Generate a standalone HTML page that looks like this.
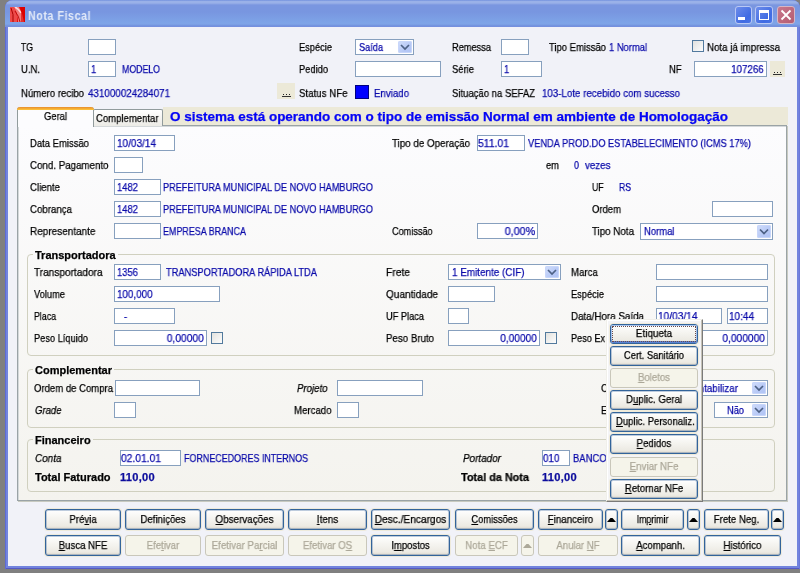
<!DOCTYPE html><html><head><meta charset='utf-8'><style>
html,body{margin:0;padding:0;}
body{width:800px;height:573px;overflow:hidden;background:#808080;position:relative;font-family:'Liberation Sans', sans-serif;font-size:11px;}
.a{position:absolute;}
.t{position:absolute;white-space:nowrap;will-change:transform;-webkit-text-stroke:0.25px currentColor;font-family:'Liberation Sans', sans-serif;font-size:11px;line-height:13px;}
.c{text-align:center;}
u{text-decoration:underline;text-underline-offset:1px;}

#t1{transform:scaleX(0.8920);}
#t2{transform:scaleX(0.7853);}
#t3{transform:scaleX(0.8431);}
#t4{transform:scaleX(0.8348);}
#t5{transform:scaleX(0.8393);}
#t6{transform:scaleX(0.8606);}
#t7{transform:scaleX(0.8515);}
#t8{transform:scaleX(0.8843);}
#t9{transform:scaleX(0.8636);}
#t10{transform:scaleX(0.8600);}
#t11{transform:scaleX(0.7969);}
#t12{transform:scaleX(0.8463);}
#t13{transform:scaleX(0.8564);}
#t14{transform:scaleX(0.8600);}
#t15{transform:scaleX(0.8520);}
#t16{transform:scaleX(0.8851);}
#t17{transform:scaleX(0.8733);}
#t18{transform:scaleX(0.8936);}
#t19{transform:scaleX(0.8813);}
#t20{transform:scaleX(0.8802);}
#t21{transform:scaleX(0.8646);}
#t22{transform:scaleX(0.8850);}
#t23{transform:scaleX(1.0783);}
#t24{transform:scaleX(0.8664);}
#t25{transform:scaleX(0.8548);}
#t26{transform:scaleX(0.8615);}
#t27{transform:scaleX(0.9106);}
#t28{transform:scaleX(0.8898);}
#t29{transform:scaleX(0.9443);}
#t30{transform:scaleX(0.8438);}
#t31{transform:scaleX(0.8853);}
#t32{transform:scaleX(0.8507);}
#t33{transform:scaleX(0.8163);}
#t34{transform:scaleX(0.8870);}
#t35{transform:scaleX(0.8759);}
#t36{transform:scaleX(0.8577);}
#t37{transform:scaleX(0.8319);}
#t38{transform:scaleX(0.7838);}
#t39{transform:scaleX(0.7853);}
#t40{transform:scaleX(0.8804);}
#t41{transform:scaleX(0.8577);}
#t42{transform:scaleX(0.8319);}
#t43{transform:scaleX(0.8625);}
#t44{transform:scaleX(0.9076);}
#t45{transform:scaleX(0.8130);}
#t46{transform:scaleX(0.8281);}
#t47{transform:scaleX(0.9775);}
#t48{transform:scaleX(0.8880);}
#t49{transform:scaleX(0.8603);}
#t51{transform:scaleX(0.9156);}
#t52{transform:scaleX(0.8577);}
#t53{transform:scaleX(0.8431);}
#t54{transform:scaleX(0.9343);}
#t55{transform:scaleX(0.8985);}
#t56{transform:scaleX(0.8753);}
#t57{transform:scaleX(0.8446);}
#t58{transform:scaleX(0.8927);}
#t59{transform:scaleX(0.9140);}
#t60{transform:scaleX(0.8431);}
#t61{transform:scaleX(0.7991);}
#t62{transform:scaleX(0.8600);}
#t63{transform:scaleX(0.8398);}
#t64{transform:scaleX(0.8909);}
#t65{transform:scaleX(0.9223);}
#t66{transform:scaleX(0.9081);}
#t67{transform:scaleX(0.8409);}
#t68{transform:scaleX(0.9305);}
#t69{transform:scaleX(0.8820);}
#t70{transform:scaleX(0.9179);}
#t71{transform:scaleX(0.8299);}
#t72{transform:scaleX(0.9261);}
#t74{transform:scaleX(0.8672);}
#t75{transform:scaleX(0.8749);}
#t76{transform:scaleX(0.8600);}
#t77{transform:scaleX(0.8951);}
#t78{transform:scaleX(0.8666);}
#t79{transform:scaleX(0.8762);}
#t80{transform:scaleX(0.8600);}
#t81{transform:scaleX(0.8421);}
#t83{transform:scaleX(0.9026);}
#t84{transform:scaleX(0.9340);}
#t85{transform:scaleX(0.8115);}
#t86{transform:scaleX(0.9004);}
#t87{transform:scaleX(0.8987);}
#t88{transform:scaleX(0.8600);}
#t90{transform:scaleX(1.0045);}
#t91{transform:scaleX(0.9875);}
#t92{transform:scaleX(1.0045);}
#t93{transform:scaleX(0.8978);}
#t94{transform:scaleX(0.8533);}
#t95{transform:scaleX(0.8719);}
#t96{transform:scaleX(0.8851);}
#t97{transform:scaleX(0.8649);}
#t98{transform:scaleX(0.8726);}
#t99{transform:scaleX(0.8886);}
#t100{transform:scaleX(0.8761);}
#t101{transform:scaleX(0.8818);}
#t102{transform:scaleX(0.8762);}
#t103{transform:scaleX(0.8947);}
#t104{transform:scaleX(0.8906);}
#t105{transform:scaleX(0.9239);}
#t106{transform:scaleX(0.8498);}
#t107{transform:scaleX(0.8856);}
#t108{transform:scaleX(0.8600);}
#t109{transform:scaleX(0.7987);}
#t110{transform:scaleX(0.8600);}
#t111{transform:scaleX(0.8753);}
#t112{transform:scaleX(0.8600);}
#t113{transform:scaleX(0.8762);}
#t114{transform:scaleX(0.8710);}
#t115{transform:scaleX(0.8885);}
#t116{transform:scaleX(0.8756);}
#t117{transform:scaleX(0.8621);}
#t118{transform:scaleX(0.8797);}
#t119{transform:scaleX(0.8600);}
#t120{transform:scaleX(0.8729);}
#t121{transform:scaleX(0.8759);}
#t122{transform:scaleX(0.8879);}</style></head><body>
<div class="a" style="left:5px;top:0px;width:795px;height:569px;background:#7284DE;border-radius:8px 8px 0 0;box-shadow:inset 1px 0 0 #5E6BD6, inset -1px 0 0 #6A78DA, inset 0 -1px 0 #5559C4;"></div>
<div class="a" style="left:5px;top:0px;width:795px;height:27px;border-radius:8px 8px 0 0;background:linear-gradient(#6586DA 0px,#9AB1E8 1px,#9AB1E8 3px,#7A96E0 5px,#7896E0 12px,#7DA3E7 22px,#7FA4E7 24px,#7190DC 26px,#7A8FE0 27px);"></div>
<div class="a" style="left:8px;top:27px;width:789px;height:539px;background:#F1F2F8;"></div>
<svg class="a" style="left:10px;top:7px" width="15" height="15"><rect width="15" height="15" fill="#E20404"/><path d="M0,0 L4,0 Q8,7 7,15 L0,15Z" fill="#EE4A4A"/><path d="M4,0 L9,0 Q13,7 14,15 L8,15 Q8,7 4,0Z" fill="#F27A7A"/><path d="M1,1 Q4,7 3,15" stroke="#A80000" stroke-width="1" fill="none"/><path d="M5,4 Q9,9 10,15" stroke="#B80000" stroke-width="0.9" fill="none"/><path d="M5,0 Q9,2 11,6" stroke="#FFD6D6" stroke-width="1.6" fill="none"/><rect x="11" y="0" width="4" height="15" fill="#D80000" opacity=".6"/></svg>
<div id="t1" class="t" style="top:9px;color:#E2E9F8;font-size:12px;line-height:15px;font-weight:bold;left:28px;transform-origin:0 50%;-webkit-text-stroke:0;letter-spacing:0.6px;">Nota Fiscal</div>
<div class="a" style="left:735px;top:6px;width:17px;height:18px;border:1px solid #B9C8F4;border-radius:3px;box-sizing:border-box;background:linear-gradient(135deg,#6E8DEA,#3F6BE3 70%,#4A74E6);"></div>
<div class="a" style="left:755px;top:6px;width:18px;height:18px;border:1px solid #B9C8F4;border-radius:3px;box-sizing:border-box;background:linear-gradient(135deg,#6E8DEA,#3F6BE3 70%,#4A74E6);"></div>
<div class="a" style="left:777px;top:6px;width:18px;height:18px;border:1px solid #D6B6C4;border-radius:3px;box-sizing:border-box;background:linear-gradient(135deg,#C8788C,#B45C72);"></div>
<div class="a" style="left:738px;top:17px;width:7px;height:3px;background:#fff;"></div>
<div class="a" style="left:759px;top:10px;width:10px;height:10px;border:1px solid #fff;border-top-width:3px;box-sizing:border-box;"></div>
<svg class="a" style="left:777px;top:6px" width="18" height="18"><path d="M4.5,4.5 L13.5,13.5 M13.5,4.5 L4.5,13.5" stroke="#fff" stroke-width="1.8"/></svg>
<div id="t2" class="t" style="top:41px;color:#000;font-size:11px;line-height:13px;left:21px;transform-origin:0 50%;">TG</div>
<div class="a" style="left:88px;top:39px;width:28px;height:16px;border:1px solid #87A0BE;background:#fff;box-sizing:border-box;"></div>
<div id="t3" class="t" style="top:41px;color:#000;font-size:11px;line-height:13px;left:299px;transform-origin:0 50%;">Espécie</div>
<div class="a" style="left:355px;top:39px;width:59px;height:16px;border:1px solid #87A0BE;background:#fff;box-sizing:border-box;"></div>
<div class="a" style="left:398px;top:41px;width:14px;height:12px;background:linear-gradient(135deg,#D2DEFB,#B7C9F6 60%,#AFC3F4);border-radius:2px;box-shadow:inset 0 0 0 1px #C8D6FA;"></div>
<svg class="a" style="left:398px;top:41px" width="14" height="12"><path d="M3.0,4.0 l4,4 l4,-4" stroke="#4D6185" stroke-width="1.7" fill="none"/></svg>
<div id="t4" class="t" style="top:41px;color:#0A0AAA;font-size:11px;line-height:13px;left:359px;transform-origin:0 50%;">Saída</div>
<div id="t5" class="t" style="top:41px;color:#000;font-size:11px;line-height:13px;left:452px;transform-origin:0 50%;">Remessa</div>
<div class="a" style="left:501px;top:39px;width:28px;height:16px;border:1px solid #87A0BE;background:#fff;box-sizing:border-box;"></div>
<div id="t6" class="t" style="top:41px;color:#000;font-size:11px;line-height:13px;left:549px;transform-origin:0 50%;">Tipo Emissão</div>
<div id="t7" class="t" style="top:41px;color:#0A0AAA;font-size:11px;line-height:13px;left:609px;transform-origin:0 50%;">1 Normal</div>
<div class="a" style="left:692px;top:40px;width:12px;height:12px;border:1px solid #1C5180;box-sizing:border-box;background:linear-gradient(135deg,#DCDCD7,#FFFFFF);opacity:.75"></div>
<div id="t8" class="t" style="top:41px;color:#000;font-size:11px;line-height:13px;left:707px;transform-origin:0 50%;">Nota já impressa</div>
<div id="t9" class="t" style="top:63px;color:#000;font-size:11px;line-height:13px;left:21px;transform-origin:0 50%;">U.N.</div>
<div class="a" style="left:88px;top:61px;width:28px;height:16px;border:1px solid #87A0BE;background:#fff;box-sizing:border-box;"></div>
<div id="t10" class="t" style="top:63px;color:#0A0AAA;font-size:11px;line-height:13px;left:91px;transform-origin:0 50%;">1</div>
<div id="t11" class="t" style="top:63px;color:#0A0AAA;font-size:11px;line-height:13px;left:122px;transform-origin:0 50%;">MODELO</div>
<div id="t12" class="t" style="top:63px;color:#000;font-size:11px;line-height:13px;left:299px;transform-origin:0 50%;">Pedido</div>
<div class="a" style="left:355px;top:61px;width:86px;height:16px;border:1px solid #87A0BE;background:#fff;box-sizing:border-box;"></div>
<div id="t13" class="t" style="top:63px;color:#000;font-size:11px;line-height:13px;left:452px;transform-origin:0 50%;">Série</div>
<div class="a" style="left:501px;top:61px;width:41px;height:16px;border:1px solid #87A0BE;background:#fff;box-sizing:border-box;"></div>
<div id="t14" class="t" style="top:63px;color:#0A0AAA;font-size:11px;line-height:13px;left:504px;transform-origin:0 50%;">1</div>
<div id="t15" class="t" style="top:63px;color:#000;font-size:11px;line-height:13px;left:669px;transform-origin:0 50%;">NF</div>
<div class="a" style="left:694px;top:61px;width:73px;height:16px;border:1px solid #87A0BE;background:#fff;box-sizing:border-box;"></div>
<div id="t16" class="t" style="top:63px;color:#0A0AAA;font-size:11px;line-height:13px;right:36px;transform-origin:100% 50%;">107266</div>
<div class="a" style="left:770px;top:61px;width:15px;height:16px;background:#ECE9D8;"></div>
<div class="a" style="left:774px;top:72px;width:1px;height:1px;background:#222"></div>
<div class="a" style="left:777px;top:72px;width:1px;height:1px;background:#222"></div>
<div class="a" style="left:780px;top:72px;width:1px;height:1px;background:#222"></div>
<div class="a" style="left:773px;top:74px;width:9px;height:1px;background:#333"></div>
<div id="t17" class="t" style="top:87px;color:#000;font-size:11px;line-height:13px;left:21px;transform-origin:0 50%;">Número recibo</div>
<div id="t18" class="t" style="top:87px;color:#0A0AAA;font-size:11px;line-height:13px;left:88px;transform-origin:0 50%;">431000024284071</div>
<div class="a" style="left:277px;top:83px;width:18px;height:16px;background:#ECE9D8;"></div>
<div class="a" style="left:283px;top:94px;width:1px;height:1px;background:#222"></div>
<div class="a" style="left:286px;top:94px;width:1px;height:1px;background:#222"></div>
<div class="a" style="left:289px;top:94px;width:1px;height:1px;background:#222"></div>
<div class="a" style="left:282px;top:96px;width:9px;height:1px;background:#333"></div>
<div id="t19" class="t" style="top:87px;color:#000;font-size:11px;line-height:13px;left:299px;transform-origin:0 50%;">Status NFe</div>
<div class="a" style="left:355px;top:85px;width:14px;height:14px;background:#0000FF;border:1px solid #000080;box-sizing:border-box;"></div>
<div id="t20" class="t" style="top:87px;color:#0A0AAA;font-size:11px;line-height:13px;left:374px;transform-origin:0 50%;">Enviado</div>
<div id="t21" class="t" style="top:87px;color:#000;font-size:11px;line-height:13px;left:452px;transform-origin:0 50%;">Situação na SEFAZ</div>
<div id="t22" class="t" style="top:87px;color:#0A0AAA;font-size:11px;line-height:13px;left:542px;transform-origin:0 50%;">103-Lote recebido com sucesso</div>
<div class="a" style="left:163px;top:107px;width:625px;height:18px;background:#ECE9D8;"></div>
<div id="t23" class="t" style="top:110px;color:#0505F5;font-size:12.5px;line-height:15px;font-weight:bold;left:170px;transform-origin:0 50%;">O sistema está operando com o tipo de emissão Normal em ambiente de Homologação</div>
<div class="a" style="left:17px;top:125px;width:770px;height:376px;border:1px solid #9AA3A6;box-sizing:border-box;background:linear-gradient(#FCFCFE,#F4F3EE);box-shadow:1px 1px 0 #C8CAC0, inset 1px 1px 0 #D4D8DA;"></div>
<div class="a" style="left:93px;top:109px;width:70px;height:17px;border:1px solid #919B9C;border-bottom:none;border-radius:2px 2px 0 0;box-sizing:border-box;background:linear-gradient(#FFFFFF,#ECEBE6);"></div>
<div id="t24" class="t" style="top:112px;color:#000;font-size:11px;line-height:13px;left:96px;transform-origin:0 50%;">Complementar</div>
<div class="a" style="left:17px;top:107px;width:77px;height:20px;border:1px solid #919B9C;border-bottom:none;border-top:none;border-radius:3px 3px 0 0;box-sizing:border-box;background:#FCFCFE;"></div>
<div class="a" style="left:17px;top:107px;width:77px;height:3px;background:linear-gradient(#E68B2C,#FFC73C);border-radius:3px 3px 0 0;"></div>
<div id="t25" class="t" style="top:110px;color:#000;font-size:11px;line-height:13px;left:44px;transform-origin:0 50%;">Geral</div>
<div id="t26" class="t" style="top:137px;color:#000;font-size:11px;line-height:13px;left:30px;transform-origin:0 50%;">Data Emissão</div>
<div class="a" style="left:114px;top:135px;width:61px;height:16px;border:1px solid #87A0BE;background:#fff;box-sizing:border-box;"></div>
<div id="t27" class="t" style="top:137px;color:#0A0AAA;font-size:11px;line-height:13px;left:117px;transform-origin:0 50%;">10/03/14</div>
<div id="t28" class="t" style="top:137px;color:#000;font-size:11px;line-height:13px;left:392px;transform-origin:0 50%;">Tipo de Operação</div>
<div class="a" style="left:477px;top:135px;width:48px;height:16px;border:1px solid #87A0BE;background:#fff;box-sizing:border-box;"></div>
<div id="t29" class="t" style="top:137px;color:#0A0AAA;font-size:11px;line-height:13px;left:478px;transform-origin:0 50%;">511.01</div>
<div id="t30" class="t" style="top:137px;color:#0A0AAA;font-size:11px;line-height:13px;left:528px;transform-origin:0 50%;">VENDA PROD.DO ESTABELECIMENTO (ICMS 17%)</div>
<div id="t31" class="t" style="top:159px;color:#000;font-size:11px;line-height:13px;left:30px;transform-origin:0 50%;">Cond. Pagamento</div>
<div class="a" style="left:114px;top:157px;width:29px;height:16px;border:1px solid #87A0BE;background:#fff;box-sizing:border-box;"></div>
<div id="t32" class="t" style="top:159px;color:#000;font-size:11px;line-height:13px;left:546px;transform-origin:0 50%;">em</div>
<div id="t33" class="t" style="top:159px;color:#0A0AAA;font-size:11px;line-height:13px;left:574px;transform-origin:0 50%;">0</div>
<div id="t34" class="t" style="top:159px;color:#0A0AAA;font-size:11px;line-height:13px;left:585px;transform-origin:0 50%;">vezes</div>
<div id="t35" class="t" style="top:181px;color:#000;font-size:11px;line-height:13px;left:30px;transform-origin:0 50%;">Cliente</div>
<div class="a" style="left:114px;top:179px;width:47px;height:16px;border:1px solid #87A0BE;background:#fff;box-sizing:border-box;"></div>
<div id="t36" class="t" style="top:181px;color:#0A0AAA;font-size:11px;line-height:13px;left:117px;transform-origin:0 50%;">1482</div>
<div id="t37" class="t" style="top:181px;color:#0A0AAA;font-size:11px;line-height:13px;left:163px;transform-origin:0 50%;">PREFEITURA MUNICIPAL DE NOVO HAMBURGO</div>
<div id="t38" class="t" style="top:181px;color:#000;font-size:11px;line-height:13px;left:592px;transform-origin:0 50%;">UF</div>
<div id="t39" class="t" style="top:181px;color:#0A0AAA;font-size:11px;line-height:13px;left:619px;transform-origin:0 50%;">RS</div>
<div id="t40" class="t" style="top:203px;color:#000;font-size:11px;line-height:13px;left:30px;transform-origin:0 50%;">Cobrança</div>
<div class="a" style="left:114px;top:201px;width:47px;height:16px;border:1px solid #87A0BE;background:#fff;box-sizing:border-box;"></div>
<div id="t41" class="t" style="top:203px;color:#0A0AAA;font-size:11px;line-height:13px;left:117px;transform-origin:0 50%;">1482</div>
<div id="t42" class="t" style="top:203px;color:#0A0AAA;font-size:11px;line-height:13px;left:163px;transform-origin:0 50%;">PREFEITURA MUNICIPAL DE NOVO HAMBURGO</div>
<div id="t43" class="t" style="top:203px;color:#000;font-size:11px;line-height:13px;left:592px;transform-origin:0 50%;">Ordem</div>
<div class="a" style="left:712px;top:201px;width:61px;height:16px;border:1px solid #87A0BE;background:#fff;box-sizing:border-box;"></div>
<div id="t44" class="t" style="top:225px;color:#000;font-size:11px;line-height:13px;left:30px;transform-origin:0 50%;">Representante</div>
<div class="a" style="left:114px;top:223px;width:47px;height:16px;border:1px solid #87A0BE;background:#fff;box-sizing:border-box;"></div>
<div id="t45" class="t" style="top:225px;color:#0A0AAA;font-size:11px;line-height:13px;left:163px;transform-origin:0 50%;">EMPRESA BRANCA</div>
<div id="t46" class="t" style="top:225px;color:#000;font-size:11px;line-height:13px;left:392px;transform-origin:0 50%;">Comissão</div>
<div class="a" style="left:477px;top:223px;width:61px;height:16px;border:1px solid #87A0BE;background:#fff;box-sizing:border-box;"></div>
<div id="t47" class="t" style="top:225px;color:#0A0AAA;font-size:11px;line-height:13px;right:265px;transform-origin:100% 50%;">0,00%</div>
<div id="t48" class="t" style="top:225px;color:#000;font-size:11px;line-height:13px;left:592px;transform-origin:0 50%;">Tipo Nota</div>
<div class="a" style="left:640px;top:223px;width:133px;height:17px;border:1px solid #87A0BE;background:#fff;box-sizing:border-box;"></div>
<div class="a" style="left:757px;top:225px;width:14px;height:13px;background:linear-gradient(135deg,#D2DEFB,#B7C9F6 60%,#AFC3F4);border-radius:2px;box-shadow:inset 0 0 0 1px #C8D6FA;"></div>
<svg class="a" style="left:757px;top:225px" width="14" height="13"><path d="M3.0,4.5 l4,4 l4,-4" stroke="#4D6185" stroke-width="1.7" fill="none"/></svg>
<div id="t49" class="t" style="top:225px;color:#0A0AAA;font-size:11px;line-height:13px;left:644px;transform-origin:0 50%;">Normal</div>
<div class="a" style="left:27px;top:254px;width:748px;height:102px;border:1px solid #D0D0BF;border-radius:4px;box-sizing:border-box;"></div>
<div class="a" style="left:33px;top:252px;width:85px;height:5px;background:#F9F9F9;"></div>
<div id="t50" class="t" style="top:249px;color:#000;font-size:11px;line-height:13px;font-weight:bold;left:35px;transform-origin:0 50%;">Transportadora</div>
<div id="t51" class="t" style="top:266px;color:#000;font-size:11px;line-height:13px;left:34px;transform-origin:0 50%;">Transportadora</div>
<div class="a" style="left:114px;top:264px;width:47px;height:16px;border:1px solid #87A0BE;background:#fff;box-sizing:border-box;"></div>
<div id="t52" class="t" style="top:266px;color:#0A0AAA;font-size:11px;line-height:13px;left:117px;transform-origin:0 50%;">1356</div>
<div id="t53" class="t" style="top:266px;color:#0A0AAA;font-size:11px;line-height:13px;left:166px;transform-origin:0 50%;">TRANSPORTADORA RÁPIDA LTDA</div>
<div id="t54" class="t" style="top:266px;color:#000;font-size:11px;line-height:13px;left:386px;transform-origin:0 50%;">Frete</div>
<div class="a" style="left:448px;top:264px;width:113px;height:16px;border:1px solid #87A0BE;background:#fff;box-sizing:border-box;"></div>
<div class="a" style="left:545px;top:266px;width:14px;height:12px;background:linear-gradient(135deg,#D2DEFB,#B7C9F6 60%,#AFC3F4);border-radius:2px;box-shadow:inset 0 0 0 1px #C8D6FA;"></div>
<svg class="a" style="left:545px;top:266px" width="14" height="12"><path d="M3.0,4.0 l4,4 l4,-4" stroke="#4D6185" stroke-width="1.7" fill="none"/></svg>
<div id="t55" class="t" style="top:266px;color:#0A0AAA;font-size:11px;line-height:13px;left:452px;transform-origin:0 50%;">1 Emitente (CIF)</div>
<div id="t56" class="t" style="top:266px;color:#000;font-size:11px;line-height:13px;left:571px;transform-origin:0 50%;">Marca</div>
<div class="a" style="left:656px;top:264px;width:112px;height:16px;border:1px solid #87A0BE;background:#fff;box-sizing:border-box;"></div>
<div id="t57" class="t" style="top:288px;color:#000;font-size:11px;line-height:13px;left:34px;transform-origin:0 50%;">Volume</div>
<div class="a" style="left:114px;top:286px;width:106px;height:16px;border:1px solid #87A0BE;background:#fff;box-sizing:border-box;"></div>
<div id="t58" class="t" style="top:288px;color:#0A0AAA;font-size:11px;line-height:13px;left:117px;transform-origin:0 50%;">100,000</div>
<div id="t59" class="t" style="top:288px;color:#000;font-size:11px;line-height:13px;left:386px;transform-origin:0 50%;">Quantidade</div>
<div class="a" style="left:448px;top:286px;width:47px;height:16px;border:1px solid #87A0BE;background:#fff;box-sizing:border-box;"></div>
<div id="t60" class="t" style="top:288px;color:#000;font-size:11px;line-height:13px;left:571px;transform-origin:0 50%;">Espécie</div>
<div class="a" style="left:656px;top:286px;width:112px;height:16px;border:1px solid #87A0BE;background:#fff;box-sizing:border-box;"></div>
<div id="t61" class="t" style="top:310px;color:#000;font-size:11px;line-height:13px;left:34px;transform-origin:0 50%;">Placa</div>
<div class="a" style="left:114px;top:308px;width:61px;height:16px;border:1px solid #87A0BE;background:#fff;box-sizing:border-box;"></div>
<div id="t62" class="t" style="top:310px;color:#0A0AAA;font-size:11px;line-height:13px;left:124px;transform-origin:0 50%;">-</div>
<div id="t63" class="t" style="top:310px;color:#000;font-size:11px;line-height:13px;left:386px;transform-origin:0 50%;">UF Placa</div>
<div class="a" style="left:448px;top:308px;width:21px;height:16px;border:1px solid #87A0BE;background:#fff;box-sizing:border-box;"></div>
<div id="t64" class="t" style="top:310px;color:#000;font-size:11px;line-height:13px;left:571px;transform-origin:0 50%;">Data/Hora Saída</div>
<div class="a" style="left:656px;top:308px;width:66px;height:16px;border:1px solid #87A0BE;background:#fff;box-sizing:border-box;"></div>
<div id="t65" class="t" style="top:310px;color:#0A0AAA;font-size:11px;line-height:13px;left:658px;transform-origin:0 50%;">10/03/14</div>
<div class="a" style="left:727px;top:308px;width:41px;height:16px;border:1px solid #87A0BE;background:#fff;box-sizing:border-box;"></div>
<div id="t66" class="t" style="top:310px;color:#0A0AAA;font-size:11px;line-height:13px;left:729px;transform-origin:0 50%;">10:44</div>
<div id="t67" class="t" style="top:332px;color:#000;font-size:11px;line-height:13px;left:34px;transform-origin:0 50%;">Peso Líquido</div>
<div class="a" style="left:114px;top:330px;width:93px;height:16px;border:1px solid #87A0BE;background:#fff;box-sizing:border-box;"></div>
<div id="t68" class="t" style="top:332px;color:#0A0AAA;font-size:11px;line-height:13px;right:596px;transform-origin:100% 50%;">0,00000</div>
<div class="a" style="left:211px;top:332px;width:12px;height:12px;border:1px solid #1C5180;box-sizing:border-box;background:linear-gradient(135deg,#DCDCD7,#FFFFFF);opacity:.75"></div>
<div id="t69" class="t" style="top:332px;color:#000;font-size:11px;line-height:13px;left:386px;transform-origin:0 50%;">Peso Bruto</div>
<div class="a" style="left:448px;top:330px;width:92px;height:16px;border:1px solid #87A0BE;background:#fff;box-sizing:border-box;"></div>
<div id="t70" class="t" style="top:332px;color:#0A0AAA;font-size:11px;line-height:13px;right:263px;transform-origin:100% 50%;">0,00000</div>
<div class="a" style="left:545px;top:332px;width:12px;height:12px;border:1px solid #1C5180;box-sizing:border-box;background:linear-gradient(135deg,#DCDCD7,#FFFFFF);opacity:.75"></div>
<div id="t71" class="t" style="top:332px;color:#000;font-size:11px;line-height:13px;left:571px;transform-origin:0 50%;">Peso Ex</div>
<div class="a" style="left:656px;top:330px;width:112px;height:16px;border:1px solid #87A0BE;background:#fff;box-sizing:border-box;"></div>
<div id="t72" class="t" style="top:332px;color:#0A0AAA;font-size:11px;line-height:13px;right:35px;transform-origin:100% 50%;">0,000000</div>
<div class="a" style="left:27px;top:369px;width:748px;height:59px;border:1px solid #D0D0BF;border-radius:4px;box-sizing:border-box;"></div>
<div class="a" style="left:33px;top:367px;width:81px;height:5px;background:#F7F7F5;"></div>
<div id="t73" class="t" style="top:364px;color:#000;font-size:11px;line-height:13px;font-weight:bold;left:35px;transform-origin:0 50%;">Complementar</div>
<div id="t74" class="t" style="top:382px;color:#000;font-size:11px;line-height:13px;left:34px;transform-origin:0 50%;">Ordem de Compra</div>
<div class="a" style="left:115px;top:380px;width:85px;height:16px;border:1px solid #87A0BE;background:#fff;box-sizing:border-box;"></div>
<div id="t75" class="t" style="top:382px;color:#000;font-size:11px;line-height:13px;font-style:italic;left:297px;transform-origin:0 50%;">Projeto</div>
<div class="a" style="left:337px;top:380px;width:86px;height:16px;border:1px solid #87A0BE;background:#fff;box-sizing:border-box;"></div>
<div id="t76" class="t" style="top:382px;color:#000;font-size:11px;line-height:13px;left:601px;transform-origin:0 50%;">Contabilizar</div>
<div class="a" style="left:680px;top:380px;width:88px;height:16px;border:1px solid #87A0BE;background:#fff;box-sizing:border-box;"></div>
<div class="a" style="left:752px;top:382px;width:14px;height:12px;background:linear-gradient(135deg,#D2DEFB,#B7C9F6 60%,#AFC3F4);border-radius:2px;box-shadow:inset 0 0 0 1px #C8D6FA;"></div>
<svg class="a" style="left:752px;top:382px" width="14" height="12"><path d="M3.0,4.0 l4,4 l4,-4" stroke="#4D6185" stroke-width="1.7" fill="none"/></svg>
<div id="t77" class="t" style="top:382px;color:#0A0AAA;font-size:11px;line-height:13px;left:686px;transform-origin:0 50%;">Contabilizar</div>
<div id="t78" class="t" style="top:404px;color:#000;font-size:11px;line-height:13px;font-style:italic;left:35px;transform-origin:0 50%;">Grade</div>
<div class="a" style="left:114px;top:402px;width:22px;height:16px;border:1px solid #87A0BE;background:#fff;box-sizing:border-box;"></div>
<div id="t79" class="t" style="top:404px;color:#000;font-size:11px;line-height:13px;left:294px;transform-origin:0 50%;">Mercado</div>
<div class="a" style="left:337px;top:402px;width:22px;height:16px;border:1px solid #87A0BE;background:#fff;box-sizing:border-box;"></div>
<div id="t80" class="t" style="top:404px;color:#000;font-size:11px;line-height:13px;left:601px;transform-origin:0 50%;">E</div>
<div class="a" style="left:714px;top:402px;width:54px;height:16px;border:1px solid #87A0BE;background:#fff;box-sizing:border-box;"></div>
<div class="a" style="left:752px;top:404px;width:14px;height:12px;background:linear-gradient(135deg,#D2DEFB,#B7C9F6 60%,#AFC3F4);border-radius:2px;box-shadow:inset 0 0 0 1px #C8D6FA;"></div>
<svg class="a" style="left:752px;top:404px" width="14" height="12"><path d="M3.0,4.0 l4,4 l4,-4" stroke="#4D6185" stroke-width="1.7" fill="none"/></svg>
<div id="t81" class="t" style="top:404px;color:#0A0AAA;font-size:11px;line-height:13px;left:727px;transform-origin:0 50%;">Não</div>
<div class="a" style="left:27px;top:439px;width:748px;height:53px;border:1px solid #D0D0BF;border-radius:4px;box-sizing:border-box;"></div>
<div class="a" style="left:33px;top:437px;width:60px;height:5px;background:#F5F5F2;"></div>
<div id="t82" class="t" style="top:434px;color:#000;font-size:11px;line-height:13px;font-weight:bold;left:35px;transform-origin:0 50%;">Financeiro</div>
<div id="t83" class="t" style="top:452px;color:#000;font-size:11px;line-height:13px;font-style:italic;left:35px;transform-origin:0 50%;">Conta</div>
<div class="a" style="left:120px;top:450px;width:61px;height:16px;border:1px solid #87A0BE;background:#fff;box-sizing:border-box;"></div>
<div id="t84" class="t" style="top:452px;color:#0A0AAA;font-size:11px;line-height:13px;left:121px;transform-origin:0 50%;">02.01.01</div>
<div id="t85" class="t" style="top:452px;color:#0A0AAA;font-size:11px;line-height:13px;left:184px;transform-origin:0 50%;">FORNECEDORES INTERNOS</div>
<div id="t86" class="t" style="top:452px;color:#000;font-size:11px;line-height:13px;font-style:italic;left:463px;transform-origin:0 50%;">Portador</div>
<div class="a" style="left:542px;top:450px;width:28px;height:16px;border:1px solid #87A0BE;background:#fff;box-sizing:border-box;"></div>
<div id="t87" class="t" style="top:452px;color:#0A0AAA;font-size:11px;line-height:13px;left:543px;transform-origin:0 50%;">010</div>
<div id="t88" class="t" style="top:452px;color:#0A0AAA;font-size:11px;line-height:13px;left:573px;transform-origin:0 50%;">BANCO DO BRASIL</div>
<div id="t89" class="t" style="top:471px;color:#000;font-size:11px;line-height:13px;font-weight:bold;left:35px;transform-origin:0 50%;">Total Faturado</div>
<div id="t90" class="t" style="top:471px;color:#0C0C9C;font-size:11px;line-height:13px;font-weight:bold;left:120px;transform-origin:0 50%;letter-spacing:0.3px;">110,00</div>
<div id="t91" class="t" style="top:471px;color:#000;font-size:11px;line-height:13px;font-weight:bold;left:461px;transform-origin:0 50%;">Total da Nota</div>
<div id="t92" class="t" style="top:471px;color:#0C0C9C;font-size:11px;line-height:13px;font-weight:bold;left:542px;transform-origin:0 50%;letter-spacing:0.3px;">110,00</div>
<div class="a" style="left:606px;top:319px;width:97px;height:183px;background:#F4F4F6;border:1px solid;border-color:#F0EFEA #7A7A7A #7A7A7A #F0EFEA;box-sizing:border-box;box-shadow:inset -1px -1px 0 #C4C1B6, inset 1px 1px 0 #FFFFFF;"></div>
<div class="a" style="left:610px;top:324px;width:88px;height:20px;border:1px solid #33649A;border-radius:3px;box-sizing:border-box;background:linear-gradient(#FFFFFF,#F6F5F1 40%,#ECEAE3 85%,#DDD7CA);box-shadow:inset 0 0 0 1px rgba(70,110,160,.35), 0 0 0 1px rgba(236,228,200,.6);"></div>
<div class="a" style="left:611px;top:325px;width:86px;height:18px;box-shadow:inset 0 -2px 0 #5A82D0, inset 0 0 0 1px #A8C4EE;border-radius:2px;"></div>
<div class="a" style="left:612px;top:326px;width:84px;height:16px;border:1px dotted #6A4A4A;box-sizing:border-box;"></div>
<div id="t93" class="t c" style="left:610px;width:88px;top:327px;color:#000;">Etiqueta</div>
<div class="a" style="left:610px;top:346px;width:88px;height:20px;border:1px solid #33649A;border-radius:3px;box-sizing:border-box;background:linear-gradient(#FFFFFF,#F6F5F1 40%,#ECEAE3 85%,#DDD7CA);box-shadow:inset 0 0 0 1px rgba(70,110,160,.35), 0 0 0 1px rgba(236,228,200,.6);"></div>
<div id="t94" class="t c" style="left:610px;width:88px;top:349px;color:#000;">Cert. Sanitário</div>
<div class="a" style="left:610px;top:368px;width:88px;height:20px;border:1px solid #C9C7BA;border-radius:3px;box-sizing:border-box;background:#F5F4EA;"></div>
<div id="t95" class="t c" style="left:610px;width:88px;top:371px;color:#ACA899;"><u>B</u>oletos</div>
<div class="a" style="left:610px;top:390px;width:88px;height:20px;border:1px solid #33649A;border-radius:3px;box-sizing:border-box;background:linear-gradient(#FFFFFF,#F6F5F1 40%,#ECEAE3 85%,#DDD7CA);box-shadow:inset 0 0 0 1px rgba(70,110,160,.35), 0 0 0 1px rgba(236,228,200,.6);"></div>
<div id="t96" class="t c" style="left:610px;width:88px;top:393px;color:#000;">D<u>u</u>plic. Geral</div>
<div class="a" style="left:610px;top:412px;width:88px;height:20px;border:1px solid #33649A;border-radius:3px;box-sizing:border-box;background:linear-gradient(#FFFFFF,#F6F5F1 40%,#ECEAE3 85%,#DDD7CA);box-shadow:inset 0 0 0 1px rgba(70,110,160,.35), 0 0 0 1px rgba(236,228,200,.6);"></div>
<div id="t97" class="t c" style="left:610px;width:88px;top:415px;color:#000;"><u>D</u>uplic. Personaliz.</div>
<div class="a" style="left:610px;top:434px;width:88px;height:20px;border:1px solid #33649A;border-radius:3px;box-sizing:border-box;background:linear-gradient(#FFFFFF,#F6F5F1 40%,#ECEAE3 85%,#DDD7CA);box-shadow:inset 0 0 0 1px rgba(70,110,160,.35), 0 0 0 1px rgba(236,228,200,.6);"></div>
<div id="t98" class="t c" style="left:610px;width:88px;top:437px;color:#000;"><u>P</u>edidos</div>
<div class="a" style="left:610px;top:457px;width:88px;height:20px;border:1px solid #C9C7BA;border-radius:3px;box-sizing:border-box;background:#F5F4EA;"></div>
<div id="t99" class="t c" style="left:610px;width:88px;top:460px;color:#ACA899;"><u>E</u>nviar NFe</div>
<div class="a" style="left:610px;top:479px;width:88px;height:20px;border:1px solid #33649A;border-radius:3px;box-sizing:border-box;background:linear-gradient(#FFFFFF,#F6F5F1 40%,#ECEAE3 85%,#DDD7CA);box-shadow:inset 0 0 0 1px rgba(70,110,160,.35), 0 0 0 1px rgba(236,228,200,.6);"></div>
<div id="t100" class="t c" style="left:610px;width:88px;top:482px;color:#000;"><u>R</u>etornar NFe</div>
<div class="a" style="left:45px;top:509px;width:76px;height:21px;border:1px solid #33649A;border-radius:3px;box-sizing:border-box;background:linear-gradient(#FFFFFF,#F6F5F1 40%,#ECEAE3 85%,#DDD7CA);box-shadow:inset 0 0 0 1px rgba(70,110,160,.35), 0 0 0 1px rgba(236,228,200,.6);"></div>
<div id="t101" class="t c" style="left:45px;width:76px;top:513px;color:#000;">Pré<u>v</u>ia</div>
<div class="a" style="left:125px;top:509px;width:76px;height:21px;border:1px solid #33649A;border-radius:3px;box-sizing:border-box;background:linear-gradient(#FFFFFF,#F6F5F1 40%,#ECEAE3 85%,#DDD7CA);box-shadow:inset 0 0 0 1px rgba(70,110,160,.35), 0 0 0 1px rgba(236,228,200,.6);"></div>
<div id="t102" class="t c" style="left:125px;width:76px;top:513px;color:#000;">Definições</div>
<div class="a" style="left:205px;top:509px;width:79px;height:21px;border:1px solid #33649A;border-radius:3px;box-sizing:border-box;background:linear-gradient(#FFFFFF,#F6F5F1 40%,#ECEAE3 85%,#DDD7CA);box-shadow:inset 0 0 0 1px rgba(70,110,160,.35), 0 0 0 1px rgba(236,228,200,.6);"></div>
<div id="t103" class="t c" style="left:205px;width:79px;top:513px;color:#000;"><u>O</u>bservações</div>
<div class="a" style="left:288px;top:509px;width:79px;height:21px;border:1px solid #33649A;border-radius:3px;box-sizing:border-box;background:linear-gradient(#FFFFFF,#F6F5F1 40%,#ECEAE3 85%,#DDD7CA);box-shadow:inset 0 0 0 1px rgba(70,110,160,.35), 0 0 0 1px rgba(236,228,200,.6);"></div>
<div id="t104" class="t c" style="left:288px;width:79px;top:513px;color:#000;"><u>I</u>tens</div>
<div class="a" style="left:371px;top:509px;width:79px;height:21px;border:1px solid #33649A;border-radius:3px;box-sizing:border-box;background:linear-gradient(#FFFFFF,#F6F5F1 40%,#ECEAE3 85%,#DDD7CA);box-shadow:inset 0 0 0 1px rgba(70,110,160,.35), 0 0 0 1px rgba(236,228,200,.6);"></div>
<div id="t105" class="t c" style="left:371px;width:79px;top:513px;color:#000;"><u>D</u>esc./Encargos</div>
<div class="a" style="left:455px;top:509px;width:79px;height:21px;border:1px solid #33649A;border-radius:3px;box-sizing:border-box;background:linear-gradient(#FFFFFF,#F6F5F1 40%,#ECEAE3 85%,#DDD7CA);box-shadow:inset 0 0 0 1px rgba(70,110,160,.35), 0 0 0 1px rgba(236,228,200,.6);"></div>
<div id="t106" class="t c" style="left:455px;width:79px;top:513px;color:#000;"><u>C</u>omissões</div>
<div class="a" style="left:538px;top:509px;width:65px;height:21px;border:1px solid #33649A;border-radius:3px;box-sizing:border-box;background:linear-gradient(#FFFFFF,#F6F5F1 40%,#ECEAE3 85%,#DDD7CA);box-shadow:inset 0 0 0 1px rgba(70,110,160,.35), 0 0 0 1px rgba(236,228,200,.6);"></div>
<div id="t107" class="t c" style="left:538px;width:65px;top:513px;color:#000;"><u>F</u>inanceiro</div>
<div class="a" style="left:605px;top:509px;width:13px;height:21px;border:1px solid #33649A;border-radius:3px;box-sizing:border-box;background:linear-gradient(#FFFFFF,#F6F5F1 40%,#ECEAE3 85%,#DDD7CA);box-shadow:inset 0 0 0 1px rgba(70,110,160,.35), 0 0 0 1px rgba(236,228,200,.6);"></div>
<div id="t108" class="t c" style="left:605px;width:13px;top:513px;color:#000;"></div>
<svg class="a" style="left:605px;top:509px" width="13" height="21"><path d="M2.0,13.0 L5.5,9.0 L7.5,9.0 L11.0,13.0 Z" fill="#000"/></svg>
<div class="a" style="left:621px;top:509px;width:63px;height:21px;border:1px solid #33649A;border-radius:3px;box-sizing:border-box;background:linear-gradient(#FFFFFF,#F6F5F1 40%,#ECEAE3 85%,#DDD7CA);box-shadow:inset 0 0 0 1px rgba(70,110,160,.35), 0 0 0 1px rgba(236,228,200,.6);"></div>
<div id="t109" class="t c" style="left:621px;width:63px;top:513px;color:#000;">Im<u>p</u>rimir</div>
<div class="a" style="left:687px;top:509px;width:13px;height:21px;border:1px solid #33649A;border-radius:3px;box-sizing:border-box;background:linear-gradient(#FFFFFF,#F6F5F1 40%,#ECEAE3 85%,#DDD7CA);box-shadow:inset 0 0 0 1px rgba(70,110,160,.35), 0 0 0 1px rgba(236,228,200,.6);"></div>
<div id="t110" class="t c" style="left:687px;width:13px;top:513px;color:#000;"></div>
<svg class="a" style="left:687px;top:509px" width="13" height="21"><path d="M2.0,13.0 L5.5,9.0 L7.5,9.0 L11.0,13.0 Z" fill="#000"/></svg>
<div class="a" style="left:704px;top:509px;width:65px;height:21px;border:1px solid #33649A;border-radius:3px;box-sizing:border-box;background:linear-gradient(#FFFFFF,#F6F5F1 40%,#ECEAE3 85%,#DDD7CA);box-shadow:inset 0 0 0 1px rgba(70,110,160,.35), 0 0 0 1px rgba(236,228,200,.6);"></div>
<div id="t111" class="t c" style="left:704px;width:65px;top:513px;color:#000;">Frete Ne<u>g</u>.</div>
<div class="a" style="left:771px;top:509px;width:13px;height:21px;border:1px solid #33649A;border-radius:3px;box-sizing:border-box;background:linear-gradient(#FFFFFF,#F6F5F1 40%,#ECEAE3 85%,#DDD7CA);box-shadow:inset 0 0 0 1px rgba(70,110,160,.35), 0 0 0 1px rgba(236,228,200,.6);"></div>
<div id="t112" class="t c" style="left:771px;width:13px;top:513px;color:#000;"></div>
<svg class="a" style="left:771px;top:509px" width="13" height="21"><path d="M2.0,13.0 L5.5,9.0 L7.5,9.0 L11.0,13.0 Z" fill="#000"/></svg>
<div class="a" style="left:45px;top:535px;width:76px;height:21px;border:1px solid #33649A;border-radius:3px;box-sizing:border-box;background:linear-gradient(#FFFFFF,#F6F5F1 40%,#ECEAE3 85%,#DDD7CA);box-shadow:inset 0 0 0 1px rgba(70,110,160,.35), 0 0 0 1px rgba(236,228,200,.6);"></div>
<div id="t113" class="t c" style="left:45px;width:76px;top:539px;color:#000;"><u>B</u>usca NFE</div>
<div class="a" style="left:125px;top:535px;width:76px;height:21px;border:1px solid #C9C7BA;border-radius:3px;box-sizing:border-box;background:#F5F4EA;"></div>
<div id="t114" class="t c" style="left:125px;width:76px;top:539px;color:#ACA899;">Efe<u>t</u>ivar</div>
<div class="a" style="left:205px;top:535px;width:79px;height:21px;border:1px solid #C9C7BA;border-radius:3px;box-sizing:border-box;background:#F5F4EA;"></div>
<div id="t115" class="t c" style="left:205px;width:79px;top:539px;color:#ACA899;">Efetivar Pa<u>r</u>cial</div>
<div class="a" style="left:288px;top:535px;width:79px;height:21px;border:1px solid #C9C7BA;border-radius:3px;box-sizing:border-box;background:#F5F4EA;"></div>
<div id="t116" class="t c" style="left:288px;width:79px;top:539px;color:#ACA899;">Efetivar O<u>S</u></div>
<div class="a" style="left:371px;top:535px;width:79px;height:21px;border:1px solid #33649A;border-radius:3px;box-sizing:border-box;background:linear-gradient(#FFFFFF,#F6F5F1 40%,#ECEAE3 85%,#DDD7CA);box-shadow:inset 0 0 0 1px rgba(70,110,160,.35), 0 0 0 1px rgba(236,228,200,.6);"></div>
<div id="t117" class="t c" style="left:371px;width:79px;top:539px;color:#000;">I<u>m</u>postos</div>
<div class="a" style="left:455px;top:535px;width:63px;height:21px;border:1px solid #C9C7BA;border-radius:3px;box-sizing:border-box;background:#F5F4EA;"></div>
<div id="t118" class="t c" style="left:455px;width:63px;top:539px;color:#ACA899;">Nota <u>E</u>CF</div>
<div class="a" style="left:521px;top:535px;width:13px;height:21px;border:1px solid #C9C7BA;border-radius:3px;box-sizing:border-box;background:#F5F4EA;"></div>
<div id="t119" class="t c" style="left:521px;width:13px;top:539px;color:#ACA899;"></div>
<svg class="a" style="left:521px;top:535px" width="13" height="21"><path d="M2.0,13.0 L5.5,9.0 L7.5,9.0 L11.0,13.0 Z" fill="#ACA899"/></svg>
<div class="a" style="left:538px;top:535px;width:80px;height:21px;border:1px solid #C9C7BA;border-radius:3px;box-sizing:border-box;background:#F5F4EA;"></div>
<div id="t120" class="t c" style="left:538px;width:80px;top:539px;color:#ACA899;">Anular <u>N</u>F</div>
<div class="a" style="left:621px;top:535px;width:79px;height:21px;border:1px solid #33649A;border-radius:3px;box-sizing:border-box;background:linear-gradient(#FFFFFF,#F6F5F1 40%,#ECEAE3 85%,#DDD7CA);box-shadow:inset 0 0 0 1px rgba(70,110,160,.35), 0 0 0 1px rgba(236,228,200,.6);"></div>
<div id="t121" class="t c" style="left:621px;width:79px;top:539px;color:#000;"><u>A</u>companh.</div>
<div class="a" style="left:704px;top:535px;width:77px;height:21px;border:1px solid #33649A;border-radius:3px;box-sizing:border-box;background:linear-gradient(#FFFFFF,#F6F5F1 40%,#ECEAE3 85%,#DDD7CA);box-shadow:inset 0 0 0 1px rgba(70,110,160,.35), 0 0 0 1px rgba(236,228,200,.6);"></div>
<div id="t122" class="t c" style="left:704px;width:77px;top:539px;color:#000;"><u>H</u>istórico</div>
</body></html>
